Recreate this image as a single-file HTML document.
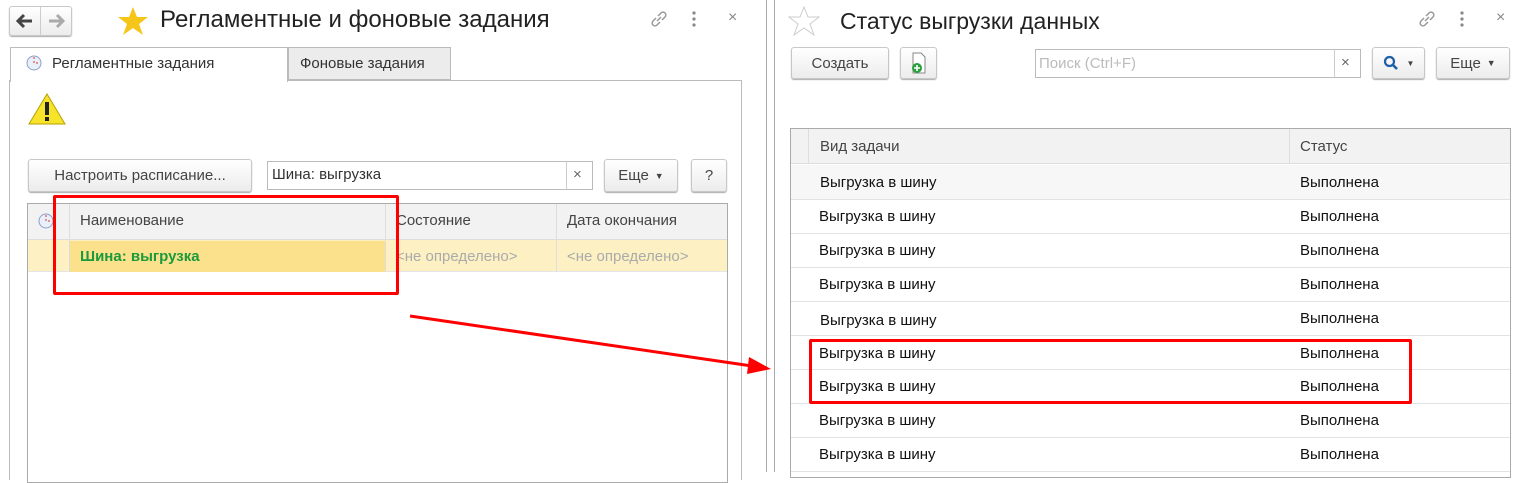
<!DOCTYPE html><html><head><meta charset="utf-8"><style>
*{box-sizing:border-box;margin:0;padding:0}
body{width:1518px;height:472px;overflow:hidden;background:#fff;font-family:"Liberation Sans",sans-serif;position:relative;color:#333}
.a{position:absolute}
.btn{position:absolute;border:1px solid #c8c8c8;border-radius:3px;background:linear-gradient(#fff,#ececec);box-shadow:0 1px 1px #aaa;font-size:15px;color:#444;display:flex;align-items:center;justify-content:center}
.t{position:absolute;font-size:15px;white-space:nowrap}
.hl{position:absolute;height:1px;background:#e2e2e2}
.vl{position:absolute;width:1px;background:#aaa}
</style></head><body>
<!-- left window -->
<div class="btn" style="left:9px;top:6px;width:63px;height:30px"></div>
<div class="a" style="left:40px;top:7px;width:1px;height:28px;background:#ccc"></div>
<svg class="a" style="left:16px;top:13px" width="18" height="16"><path d="M2 8H16M8 2L2 8L8 14" stroke="#444" stroke-width="3" fill="none"/></svg>
<svg class="a" style="left:47px;top:13px" width="18" height="16"><path d="M16 8H2M10 2L16 8L10 14" stroke="#aaa" stroke-width="3" fill="none"/></svg>
<svg class="a" style="left:117px;top:6px" width="32" height="30" viewBox="0 0 32 30"><polygon points="16,1 20,11 31,11 22,18 26,29 16,22 6,29 10,18 1,11 12,11" fill="#f5c518"/></svg>
<div class="t" style="left:160px;top:6px;font-size:24px;color:#222">Регламентные и фоновые задания</div>
<svg class="a" style="left:649px;top:9px" width="20" height="20"><path d="M8 12L12 8M7 9L4 12A2.8 2.8 0 0 0 8 16L11 13M13 11L16 8A2.8 2.8 0 0 0 12 4L9 7" stroke="#999" stroke-width="1.5" fill="none"/></svg>
<svg class="a" style="left:691px;top:10px" width="6" height="18"><circle cx="3" cy="3" r="1.6" fill="#888"/><circle cx="3" cy="9" r="1.6" fill="#888"/><circle cx="3" cy="15" r="1.6" fill="#888"/></svg>
<div class="t" style="left:728px;top:9px;font-size:16px;color:#888">×</div>
<div class="a" style="left:9px;top:80px;width:733px;height:400px;border:1px solid #bbb;border-bottom:none"></div>
<div class="a" style="left:10px;top:47px;width:278px;height:35px;border:1px solid #bbb;border-bottom:none;background:#fff"></div>
<div class="a" style="left:288px;top:47px;width:163px;height:33px;border:1px solid #bbb;background:#ececec"></div>
<svg class="a" style="left:25px;top:54px" width="18" height="18"><circle cx="9" cy="9" r="7" fill="#eaf0fa" stroke="#8aa0c8"/><path d="M9 3V9H14" stroke="#e03030" fill="none" stroke-dasharray="2 2"/></svg>
<div class="t" style="left:52px;top:55px">Регламентные задания</div>
<div class="t" style="left:300px;top:55px">Фоновые задания</div>
<svg class="a" style="left:27px;top:92px" width="40" height="34"><polygon points="20,2 38,32 2,32" fill="#f7e32a" stroke="#b8a000"/><rect x="18" y="10" width="4" height="13" fill="#222"/><rect x="18" y="25" width="4" height="4" fill="#222"/></svg>
<div class="btn" style="left:28px;top:159px;width:224px;height:33px">Настроить расписание...</div>
<div class="a" style="left:267px;top:161px;width:326px;height:29px;border:1px solid #bbb;background:#fff"></div>
<div class="a" style="left:566px;top:161px;width:1px;height:29px;background:#ccc"></div>
<div class="t" style="left:272px;top:166px;color:#333">Шина: выгрузка</div>
<div class="t" style="left:573px;top:166px;color:#666">×</div>
<div class="btn" style="left:604px;top:159px;width:74px;height:33px">Еще <span style="font-size:9px;margin-left:6px">▼</span></div>
<div class="btn" style="left:691px;top:159px;width:36px;height:33px">?</div>
<div class="a" style="left:27px;top:203px;width:701px;height:280px;border:1px solid #aaa"></div>
<div class="a" style="left:28px;top:204px;width:699px;height:36px;background:#f2f2f2;border-bottom:1px solid #ddd"></div>
<div class="a" style="left:28px;top:240px;width:699px;height:32px;background:#fdf1c4;border-bottom:1px solid #e5e5e5"></div>
<div class="a" style="left:70px;top:241px;width:315px;height:31px;background:#fbe18c"></div>
<div class="a" style="left:69px;top:204px;width:1px;height:68px;background:#ddd"></div>
<div class="a" style="left:385px;top:204px;width:1px;height:68px;background:#ddd"></div>
<div class="a" style="left:556px;top:204px;width:1px;height:68px;background:#ddd"></div>
<svg class="a" style="left:37px;top:212px" width="18" height="18"><circle cx="9" cy="9" r="7" fill="#eaf0fa" stroke="#8aa0c8"/><path d="M9 3V9H14" stroke="#e03030" fill="none" stroke-dasharray="2 2"/></svg>
<div class="t" style="left:80px;top:212px;color:#444">Наименование</div>
<div class="t" style="left:396px;top:212px;color:#444">Состояние</div>
<div class="t" style="left:567px;top:212px;color:#444">Дата окончания</div>
<div class="t" style="left:80px;top:248px;color:#1a9a3a;font-weight:bold">Шина: выгрузка</div>
<div class="t" style="left:396px;top:248px;color:#aaa">&lt;не определено&gt;</div>
<div class="t" style="left:567px;top:248px;color:#aaa">&lt;не определено&gt;</div>
<div class="a" style="left:53px;top:195px;width:346px;height:100px;border:3px solid #f00;border-radius:2px"></div>
<!-- divider -->
<div class="vl" style="left:766px;top:0;height:472px"></div>
<div class="vl" style="left:774px;top:0;height:472px"></div>
<!-- right window -->
<svg class="a" style="left:788px;top:6px" width="32" height="30" viewBox="0 0 32 30"><polygon points="16,1 20,11 31,11 22,18 26,29 16,22 6,29 10,18 1,11 12,11" fill="none" stroke="#ccc"/></svg>
<div class="t" style="left:840px;top:8px;font-size:23px;color:#222">Статус выгрузки данных</div>
<svg class="a" style="left:1417px;top:9px" width="20" height="20"><path d="M8 12L12 8M7 9L4 12A2.8 2.8 0 0 0 8 16L11 13M13 11L16 8A2.8 2.8 0 0 0 12 4L9 7" stroke="#999" stroke-width="1.5" fill="none"/></svg>
<svg class="a" style="left:1459px;top:10px" width="6" height="18"><circle cx="3" cy="3" r="1.6" fill="#888"/><circle cx="3" cy="9" r="1.6" fill="#888"/><circle cx="3" cy="15" r="1.6" fill="#888"/></svg>
<div class="t" style="left:1496px;top:9px;font-size:16px;color:#888">×</div>
<div class="btn" style="left:791px;top:47px;width:98px;height:32px">Создать</div>
<div class="btn" style="left:900px;top:47px;width:37px;height:32px"><svg width="16" height="22"><path d="M2 1H10L14 5V21H2Z" fill="#fff" stroke="#888"/><circle cx="6" cy="16" r="5" fill="#2aa040"/><path d="M6 13V19M3 16H9" stroke="#fff" stroke-width="1.6"/></svg></div>
<div class="a" style="left:1035px;top:49px;width:326px;height:29px;border:1px solid #bbb;background:#fff"></div>
<div class="a" style="left:1334px;top:49px;width:1px;height:29px;background:#ccc"></div>
<div class="t" style="left:1039px;top:55px;color:#bbb">Поиск (Ctrl+F)</div>
<div class="t" style="left:1341px;top:54px;color:#666">×</div>
<div class="btn" style="left:1372px;top:47px;width:53px;height:32px"><svg width="16" height="16"><circle cx="6.5" cy="6.5" r="4.5" fill="none" stroke="#1d5fa8" stroke-width="2.2"/><path d="M10 10L14 14" stroke="#1d5fa8" stroke-width="2.6"/></svg><span style="font-size:8px;margin-left:8px">▼</span></div>
<div class="btn" style="left:1436px;top:47px;width:74px;height:32px">Еще <span style="font-size:9px;margin-left:6px">▼</span></div>
<div class="a" style="left:790px;top:128px;width:721px;height:350px;border:1px solid #aaa"></div>
<div class="a" style="left:791px;top:129px;width:719px;height:35px;background:#f2f2f2;border-bottom:1px solid #ddd"></div>
<div class="a" style="left:808px;top:129px;width:1px;height:35px;background:#ddd"></div>
<div class="a" style="left:1289px;top:129px;width:1px;height:35px;background:#ddd"></div>
<div class="t" style="left:820px;top:138px;color:#444">Вид задачи</div>
<div class="t" style="left:1300px;top:138px;color:#444">Статус</div>
<div class="a" style="left:791px;top:165px;width:719px;height:34px;background:#f7f7f7"></div>
<div class="hl" style="left:791px;top:199px;width:719px"></div>
<div class="hl" style="left:791px;top:233px;width:719px"></div>
<div class="hl" style="left:791px;top:267px;width:719px"></div>
<div class="hl" style="left:791px;top:301px;width:719px"></div>
<div class="hl" style="left:791px;top:335px;width:719px"></div>
<div class="hl" style="left:791px;top:369px;width:719px"></div>
<div class="hl" style="left:791px;top:403px;width:719px"></div>
<div class="hl" style="left:791px;top:437px;width:719px"></div>
<div class="hl" style="left:791px;top:471px;width:719px"></div>
<div class="t" style="left:820px;top:174px;color:#111">Выгрузка в шину</div><div class="t" style="left:1300px;top:174px;color:#111">Выполнена</div>
<div class="t" style="left:819px;top:208px;color:#111">Выгрузка в шину</div><div class="t" style="left:1300px;top:208px;color:#111">Выполнена</div>
<div class="t" style="left:819px;top:242px;color:#111">Выгрузка в шину</div><div class="t" style="left:1300px;top:242px;color:#111">Выполнена</div>
<div class="t" style="left:819px;top:276px;color:#111">Выгрузка в шину</div><div class="t" style="left:1300px;top:276px;color:#111">Выполнена</div>
<div class="t" style="left:820px;top:312px;color:#111">Выгрузка в шину</div><div class="t" style="left:1300px;top:310px;color:#111">Выполнена</div>
<div class="t" style="left:819px;top:345px;color:#111">Выгрузка в шину</div><div class="t" style="left:1300px;top:345px;color:#111">Выполнена</div>
<div class="t" style="left:819px;top:378px;color:#111">Выгрузка в шину</div><div class="t" style="left:1300px;top:378px;color:#111">Выполнена</div>
<div class="t" style="left:819px;top:412px;color:#111">Выгрузка в шину</div><div class="t" style="left:1300px;top:412px;color:#111">Выполнена</div>
<div class="t" style="left:819px;top:446px;color:#111">Выгрузка в шину</div><div class="t" style="left:1300px;top:446px;color:#111">Выполнена</div>
<div class="a" style="left:809px;top:339px;width:603px;height:65px;border:3px solid #f00;border-radius:2px"></div>
<svg class="a" style="left:0;top:0" width="1518" height="472"><line x1="410" y1="316" x2="752" y2="366" stroke="#f00" stroke-width="3"/><polygon points="771,369 749,357 747,374" fill="#f00"/></svg>
</body></html>
